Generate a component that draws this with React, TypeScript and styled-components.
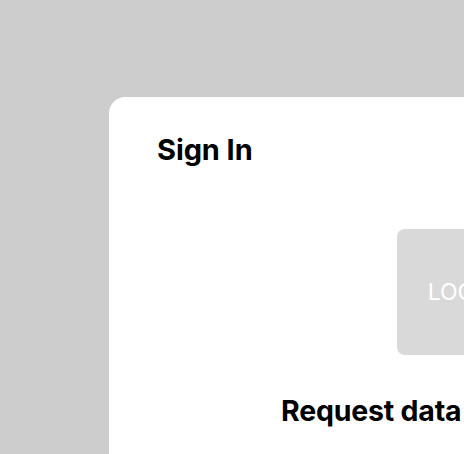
import React from "react";
import styled, { createGlobalStyle } from "styled-components";

const Global = createGlobalStyle`
  html, body { margin: 0; padding: 0; background: #cccccc; }
  body { font-family: Inter, "Noto Sans", sans-serif; overflow: hidden; }
`;

const Page = styled.div`
  min-height: 454px;
  padding: 97px 0 0 109px;
  box-sizing: border-box;
`;

const Card = styled.section`
  width: 640px;
  min-height: 500px;
  background: #ffffff;
  border-radius: 16px;
  padding: 36px 48px;
  box-sizing: border-box;
  display: flex;
  flex-direction: column;
`;

const Title = styled.h1`
  margin: 0;
  font-size: 29px;
  font-weight: 700;
  letter-spacing: -0.1px;
  color: #000;
  line-height: 34px;
`;

const LogoRow = styled.div`
  display: flex;
  padding-left: 240px;
  margin-top: 62px;
`;

const Logo = styled.div`
  width: 126px;
  height: 126px;
  border-radius: 8px;
  background: #d9d9d9;
  color: #ffffff;
  font-size: 23px;
  font-weight: 400;
  display: flex;
  align-items: center;
  justify-content: center;
`;

const Subtitle = styled.h2`
  margin: 39px 0 0 124px;
  font-size: 28.5px;
  font-weight: 700;
  letter-spacing: -0.2px;
  color: #000;
  line-height: 34px;
`;

export default function App() {
  return (
    <>
      <Global />
      <Page>
        <Card>
          <Title>Sign In</Title>
          <LogoRow>
            <Logo>LOGO</Logo>
          </LogoRow>
          <Subtitle>Request data</Subtitle>
        </Card>
      </Page>
    </>
  );
}
